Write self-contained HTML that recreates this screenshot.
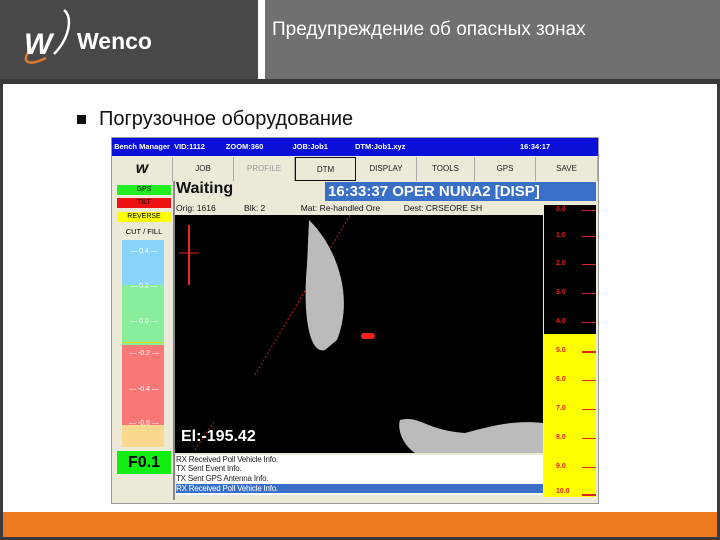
<!DOCTYPE html>
<html><head><meta charset="utf-8"><style>
*{margin:0;padding:0;box-sizing:border-box}
body{width:720px;height:540px;background:#3a3a3c;position:relative;overflow:hidden;font-family:"Liberation Sans",sans-serif}
.a{position:absolute}
.btn{position:absolute;top:157px;height:24px;background:#ece9d8;border-right:1px solid #aaa;font-size:8px;text-align:center;line-height:24px;color:#222}
.sc{position:absolute;left:124px;width:40px;font-size:7px;color:#fff;text-align:center}
.rs{position:absolute;left:556px;font-size:7px;color:#d22;font-weight:bold}
.rt{position:absolute;left:582px;width:14px;height:1px;background:#d22}
.msg{position:absolute;left:176px;width:367px;height:9px;font-size:8px;line-height:9px;color:#222;letter-spacing:-0.2px}
</style></head><body>
<div class="a" style="left:0;top:0;width:258px;height:79px;background:#48484a"></div>
<div class="a" style="left:258px;top:0;width:7px;height:79px;background:#fff"></div>
<div class="a" style="left:265px;top:0;width:455px;height:79px;background:#707074"></div>
<div class="a" style="left:272px;top:19px;color:#fff;font-size:19px">Предупреждение об опасных зонах</div>
<svg class="a" style="left:12px;top:4px" width="66" height="66" viewBox="0 0 66 66">
<path d="M52 6 C62 14 56 36 42 50" stroke="#fff" stroke-width="2.5" fill="none"/>
<path d="M20 44 C8 56 14 64 34 54" stroke="#d9782f" stroke-width="2.5" fill="none"/>
<text x="12" y="50" fill="#fff" font-family="Liberation Sans" font-weight="bold" font-style="italic" font-size="30">W</text>
</svg>
<div class="a" style="left:77px;top:28px;color:#fff;font-size:23px;font-weight:bold">Wenco</div>
<div class="a" style="left:3px;top:84px;width:714px;height:428px;background:#fff"></div>
<div class="a" style="left:77px;top:115px;width:9px;height:9px;background:#111"></div>
<div class="a" style="left:99px;top:108px;font-size:20px;color:#111">Погрузочное оборудование</div>
<div class="a" style="left:3px;top:512px;width:714px;height:25px;background:#f07a22"></div>
<div class="a" style="left:111px;top:137px;width:488px;height:367px;background:#ece9d8;border:1px solid #999"></div>
<div class="a" style="left:112px;top:138px;width:486px;height:18px;background:#0a10d8;color:#fff;font-size:7.5px;line-height:18px;white-space:pre;font-weight:bold"> Bench Manager  VID:1112          ZOOM:360              JOB:Job1             DTM:Job1.xyz                                                       16:34:17</div>
<div class="btn" style="left:112px;width:61px;font-weight:bold;font-size:16px;font-style:italic;color:#111">w</div>
<div class="btn" style="left:173px;width:61px">JOB</div>
<div class="btn" style="left:234px;width:61px;color:#999">PROFILE</div>
<div class="btn" style="left:295px;width:61px;border:1px solid #111">DTM</div>
<div class="btn" style="left:356px;width:61px">DISPLAY</div>
<div class="btn" style="left:417px;width:58px">TOOLS</div>
<div class="btn" style="left:475px;width:61px">GPS</div>
<div class="btn" style="left:536px;width:62px">SAVE</div>
<div class="a" style="left:117px;top:185px;width:54px;height:10px;background:#22ee22;font-size:7px;text-align:center;line-height:10px">GPS</div>
<div class="a" style="left:117px;top:198px;width:54px;height:10px;background:#ee1111;font-size:7px;text-align:center;line-height:10px">TILT</div>
<div class="a" style="left:117px;top:212px;width:54px;height:10px;background:#ffff00;font-size:7px;text-align:center;line-height:10px">REVERSE</div>
<div class="a" style="left:117px;top:227px;width:54px;font-size:7.5px;text-align:center">CUT / FILL</div>
<div class="a" style="left:122px;top:240px;width:42px;height:45px;background:#88d4fb"></div>
<div class="a" style="left:122px;top:285px;width:42px;height:60px;background:#88ee9c"></div>
<div class="a" style="left:122px;top:342px;width:42px;height:1px;background:#dddd00"></div>
<div class="a" style="left:122px;top:345px;width:42px;height:80px;background:#f87878"></div>
<div class="a" style="left:122px;top:425px;width:42px;height:22px;background:#fbd890"></div>
<div class="sc" style="top:248px">— 0.4 —</div><div class="sc" style="top:283px">— 0.2 —</div><div class="sc" style="top:318px">— 0.0 —</div><div class="sc" style="top:350px">— -0.2 —</div><div class="sc" style="top:386px">— -0.4 —</div><div class="sc" style="top:420px">— -0.6 —</div>
<div class="a" style="left:117px;top:451px;width:54px;height:23px;background:#11ee11;font-size:16px;font-weight:bold;text-align:center;line-height:23px">F0.1</div>
<div class="a" style="left:173px;top:181px;width:2px;height:319px;background:#888"></div>
<div class="a" style="left:176px;top:180px;font-size:16px;font-weight:bold;color:#111">Waiting</div>
<div class="a" style="left:325px;top:182px;width:271px;height:19px;background:#3a6fc8;color:#fff;font-size:15px;font-weight:bold;line-height:19px;padding-left:3px;white-space:nowrap;overflow:hidden">16:33:37 OPER NUNA2 [DISP]</div>
<div class="a" style="left:176px;top:203px;font-size:8.5px;white-space:pre;color:#111">Orig: 1616            Blk: 2               Mat: Re-handled Ore          Dest: CRSEORE SH</div>
<div class="a" style="left:175px;top:215px;width:368px;height:238px;background:#000"></div>
<svg class="a" style="left:175px;top:215px" width="368" height="238">
<line x1="14" y1="10" x2="14" y2="70" stroke="#e22" stroke-width="2"/>
<line x1="4" y1="38" x2="24" y2="38" stroke="#e22" stroke-width="1"/>
<line x1="80" y1="160" x2="175" y2="0" stroke="#c22" stroke-dasharray="2 2"/>
<line x1="20" y1="235" x2="40" y2="205" stroke="#c22" stroke-dasharray="2 2"/>
<path d="M134 5 C160 30 180 80 162 125 L150 135 C132 140 128 90 132 50 Z" fill="#bbb"/>
<path d="M225 205 C245 200 250 215 290 218 C320 210 340 205 368 208 L368 238 L240 238 C228 230 222 215 225 205 Z" fill="#bbb"/>
<rect x="186" y="118" width="14" height="6" rx="3" fill="#e22"/>
</svg>
<div class="a" style="left:181px;top:428px;color:#fff;font-size:16px;font-weight:bold">El:-195.42</div>
<div class="a" style="left:176px;top:455px;width:367px;height:40px;background:#fff"></div>
<div class="msg" style="top:455px">RX Received Poll Vehicle Info.</div>
<div class="msg" style="top:464px">TX Sent Event Info.</div>
<div class="msg" style="top:474px">TX Sent GPS Antenna Info.</div>
<div class="msg" style="top:484px;background:#3a6fc8;color:#fff">RX Received Poll Vehicle Info.</div>
<div class="a" style="left:544px;top:205px;width:52px;height:129px;background:#000"></div>
<div class="a" style="left:544px;top:334px;width:52px;height:163px;background:#ffff00"></div>
<div class="rs" style="top:206px">0.0</div><div class="rt" style="top:210px"></div>
<div class="rs" style="top:232px">1.0</div><div class="rt" style="top:236px"></div>
<div class="rs" style="top:260px">2.0</div><div class="rt" style="top:264px"></div>
<div class="rs" style="top:289px">3.0</div><div class="rt" style="top:293px"></div>
<div class="rs" style="top:318px">4.0</div><div class="rt" style="top:322px"></div>
<div class="rs" style="top:347px">5.0</div><div class="rt" style="top:351px;height:2px"></div>
<div class="rs" style="top:376px">6.0</div><div class="rt" style="top:380px"></div>
<div class="rs" style="top:405px">7.0</div><div class="rt" style="top:409px"></div>
<div class="rs" style="top:434px">8.0</div><div class="rt" style="top:438px"></div>
<div class="rs" style="top:463px">9.0</div><div class="rt" style="top:467px"></div>
<div class="rs" style="top:488px">10.0</div><div class="rt" style="top:494px;height:2px"></div>
</body></html>
